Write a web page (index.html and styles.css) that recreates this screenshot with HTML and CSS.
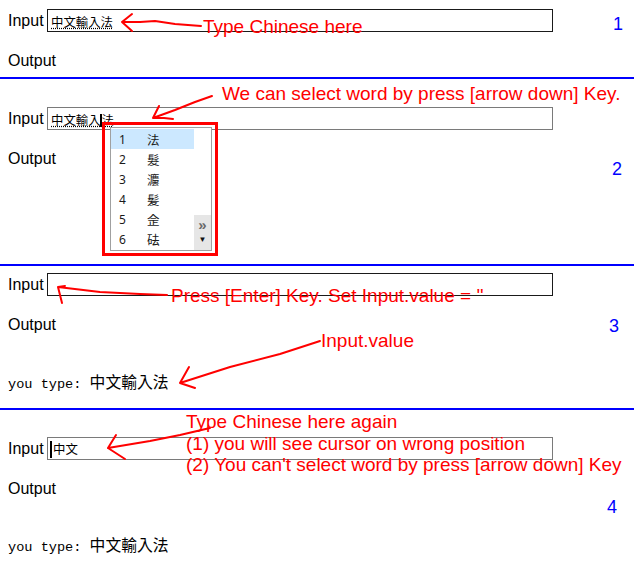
FILE: index.html
```html
<!DOCTYPE html>
<html>
<head>
<meta charset="utf-8">
<title>IME demo</title>
<link rel="stylesheet" href="styles.css">
</head>
<body>
<div class="sec s1">
  <div class="row">
    <span class="label">Input</span>
    <div class="box dark"><span class="comp">中文輸入法</span></div>
  </div>
  <div class="output">Output</div>
  <svg class="ink" width="634" height="77" viewBox="0 0 634 77">
    <path d="M122 22 L132 14 M122 22 L132 31 M122 22 L140 22 L155 21 L175 24 L201 26"/>
  </svg>
  <div class="note n1">Type Chinese here</div>
  <div class="num m1">1</div>
</div>

<div class="sec s2">
  <div class="row">
    <span class="label">Input</span>
    <div class="box gray"><span class="comp">中文輸入<span class="caret c2"></span>法</span></div>
  </div>
  <div class="output">Output</div>
  <div class="ime">
    <div class="cand">
      <div class="list">
        <div class="item sel"><span class="ix">1</span><span class="ch">法</span></div>
        <div class="item"><span class="ix">2</span><span class="ch">髮</span></div>
        <div class="item"><span class="ix">3</span><span class="ch">灋</span></div>
        <div class="item"><span class="ix">4</span><span class="ch">髪</span></div>
        <div class="item"><span class="ix">5</span><span class="ch">佱</span></div>
        <div class="item"><span class="ix">6</span><span class="ch">砝</span></div>
      </div>
      <div class="side">
        <div class="scroll">
          <span class="more">»</span>
          <span class="down">▼</span>
        </div>
      </div>
    </div>
  </div>
  <svg class="ink" width="634" height="185" viewBox="0 0 634 185">
    <path d="M153 39 L159 27 M153 39 L164 39 L173 40 M153 39 L175 31 L195 23 L212 17"/>
  </svg>
  <div class="note n2">We can select word by press [arrow down] Key.</div>
  <div class="num m2">2</div>
</div>

<div class="sec s3">
  <div class="row">
    <span class="label">Input</span>
    <div class="box dark"></div>
  </div>
  <div class="output">Output</div>
  <div class="typed">you type: <span class="cjk">中文輸入法</span></div>
  <svg class="ink" width="634" height="142" viewBox="0 0 634 142">
    <path d="M58 21 L62 37 M58 21 L65 20 M58 21 L100 26 L140 28 L167 29"/>
    <path d="M180 117 L189 101 M180 117 L195 122 M180 117 L230 101 L280 88 L320 75"/>
  </svg>
  <div class="note n3a">Press [Enter] Key. Set Input.value = ''</div>
  <div class="note n3b">Input.value</div>
  <div class="num m3">3</div>
</div>

<div class="sec s4">
  <div class="row">
    <span class="label">Input</span>
    <div class="box gray"><span class="comp plain"><span class="caret c4"></span>中文</span></div>
  </div>
  <div class="output">Output</div>
  <div class="typed t4">you type: <span class="cjk">中文輸入法</span></div>
  <svg class="ink" width="634" height="176" viewBox="0 0 634 176">
    <path d="M108 38 L116 25 M108 38 L125 49 M108 38 L150 31 L180 25 L210 18"/>
  </svg>
  <div class="note n4">Type Chinese here again<br>(1) you will see cursor on wrong position<br>(2) You can't select word by press [arrow down] Key</div>
  <div class="num m4">4</div>
</div>
</body>
</html>
```
FILE: styles.css
```css
body {
  margin: 0;
  background: #fff;
  color: #000;
  font-family: "Liberation Sans", Arial, sans-serif;
  font-size: 16px;
}

.sec {
  position: relative;
  box-sizing: border-box;
  width: 634px;
  border-bottom: 2px solid #0000ff;
}

.s1 { height: 79px; padding-top: 9px; }
.s2 { height: 187px; padding-top: 28px; }
.s3 { height: 144px; padding-top: 7px; }
.s4 { height: 176px; padding-top: 27px; border-bottom: none; }

.row {
  display: flex;
  align-items: center;
  padding-left: 8px;
}

.label {
  width: 39px;
  line-height: 18px;
}

.box {
  box-sizing: border-box;
  width: 506px;
  height: 23px;
  border: 1px solid #1a1a1a;
  padding: 3px 0 0 3px;
  display: flex;
  align-items: center;
  background: #fff;
}

.box.gray { border-color: #7a7a7a; }

.comp {
  position: relative;
  font-family: "Noto Sans CJK TC", sans-serif;
  font-size: 12.4px;
  line-height: 14px;
  text-decoration: underline dotted #000;
  text-underline-offset: 1px;
}

.comp.plain { text-decoration: none; }

.caret {
  display: inline-block;
  width: 2px;
  background: #000;
  vertical-align: middle;
}

.c2 { height: 13px; margin: -3px 0 0 -1px; }
.c4 { height: 17px; margin: -3px 1px 0 -1px; }

.output {
  margin: 20px 0 0 8px;
  line-height: 18px;
}

.typed {
  margin: 39px 0 0 8px;
  font-family: "Liberation Mono", monospace;
  font-size: 13.6px;
  line-height: 18px;
  white-space: pre;
}

.typed.t4 { margin-top: 38px; }

.typed .cjk {
  font-family: "Noto Sans CJK TC", sans-serif;
  font-size: 15.8px;
  line-height: 18px;
}

/* IME candidate window */
.ime {
  position: absolute;
  left: 102px;
  top: 43px;
  box-sizing: border-box;
  width: 116px;
  height: 134px;
  border: 3px solid #ff0000;
  padding: 2px 3px 2px 5px;
}

.cand {
  box-sizing: border-box;
  width: 102px;
  height: 124px;
  border: 1px solid #a0a0a0;
  background: #fff;
  display: flex;
  padding-top: 1px;
}

.list {
  width: 83px;
  display: flex;
  flex-direction: column;
}

.item {
  display: flex;
  align-items: center;
  height: 20px;
  font-family: "Noto Sans", "Noto Sans CJK TC", sans-serif;
  font-size: 12px;
  color: #1a1a1a;
}

.item.sel { background: #cce8ff; }

.ix { width: 9px; margin-left: 8px; }
.ch {
  margin-left: 19px;
  font-family: "Noto Sans CJK TC", sans-serif;
  font-size: 12.5px;
}

.side {
  width: 17px;
  display: flex;
  flex-direction: column;
  justify-content: flex-end;
}

.scroll {
  height: 35px;
  background: #e6e6e6;
  display: flex;
  flex-direction: column;
  align-items: center;
}

.more {
  font-size: 15px;
  font-weight: bold;
  color: #6a6a6a;
  line-height: 17px;
  margin-top: 1px;
}

.down {
  font-size: 8px;
  line-height: 14px;
  color: #111;
}

/* annotations */
.ink {
  position: absolute;
  left: 0;
  top: 0;
  pointer-events: none;
  fill: none;
  stroke: #ff0000;
  stroke-width: 2;
  stroke-linecap: round;
  stroke-linejoin: round;
}

.note {
  position: absolute;
  color: #ff0000;
  font-size: 19px;
  line-height: 20px;
  white-space: nowrap;
}

.n1 { left: 203px; top: 17px; }
.n2 { left: 222px; top: 5px; }
.n3a { left: 171px; top: 20px; }
.n3b { left: 321px; top: 65px; }
.n4 { left: 186px; top: 1px; line-height: 21.5px; }

.num {
  position: absolute;
  color: #0000ff;
  font-size: 18px;
  line-height: 20px;
}

.m1 { left: 613px; top: 14px; }
.m2 { left: 612px; top: 80px; }
.m3 { left: 609px; top: 50px; }
.m4 { left: 607px; top: 87px; }
```
